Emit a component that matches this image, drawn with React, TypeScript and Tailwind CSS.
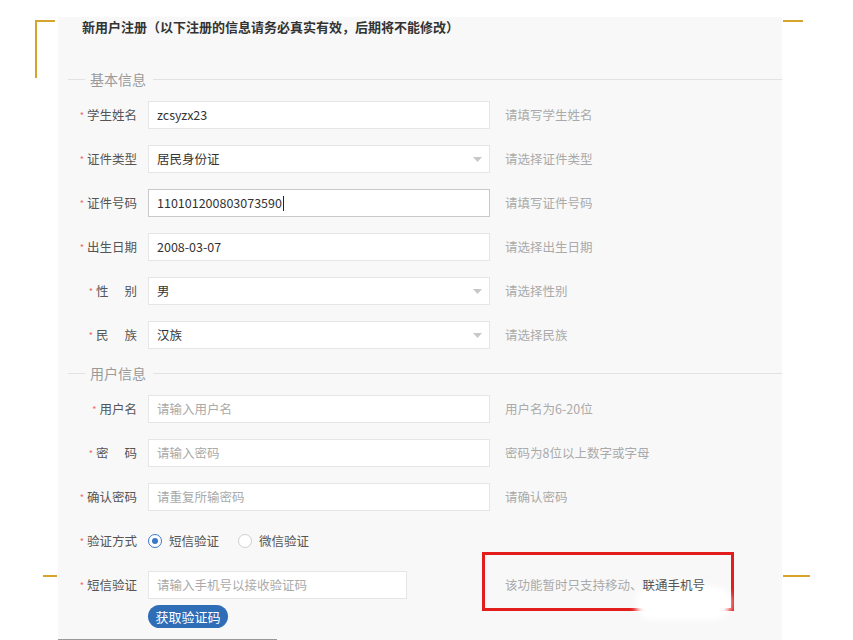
import type { ReactNode } from "react";

const FONT = "font-['Noto_Sans_CJK_SC','Noto_Sans',sans-serif]";

interface FieldProps {
	label: string[];
	children: ReactNode;
	hint?: ReactNode;
}

/** Right aligned label with red asterisk; two-char labels are spread apart */
function Label({ label }: { label: string[] }) {
	return (
		<div className="flex w-[79px] shrink-0 items-center justify-end text-[12.5px] text-[#555]">
			<span className="mr-[3px] text-[9px] text-[#e66] leading-none">*</span>
			<span className={label.length === 2 ? "flex gap-[16px]" : "flex"}>
				{label.map((c, i) => (
					<span key={i}>{c}</span>
				))}
			</span>
		</div>
	);
}

function Field({ label, children, hint }: FieldProps) {
	return (
		<div className="flex h-[28px] items-center">
			<Label label={label} />
			<div className="ml-[11px]">{children}</div>
			{hint && <div className="ml-[15px] text-[12.5px] text-[#aaa]">{hint}</div>}
		</div>
	);
}

function TextBox({
	value,
	placeholder,
	focused,
	width = "w-[342px]",
}: {
	value?: string;
	placeholder?: string;
	focused?: boolean;
	width?: string;
}) {
	return (
		<div
			className={`flex h-[28px] ${width} items-center border bg-white px-[8px] text-[12.5px] ${
				focused ? "border-[#c9c9c9]" : "border-[#e6e6e6]"
			}`}
		>
			{value ? (
				<span className="text-[#333]">{value}</span>
			) : (
				<span className="text-[#aaa]">{placeholder}</span>
			)}
			{focused && <span className="ml-px h-[15px] w-px bg-[#222]" />}
		</div>
	);
}

function SelectBox({ value }: { value: string }) {
	return (
		<div className="flex h-[28px] w-[342px] items-center justify-between border border-[#e6e6e6] bg-white pr-[7px] pl-[8px] text-[12.5px] text-[#333]">
			<span>{value}</span>
			<svg width="9" height="5" viewBox="0 0 9 5" aria-hidden="true">
				<path d="M0 0h9L4.5 5z" fill="#c8c8c8" />
			</svg>
		</div>
	);
}

function SectionTitle({ children }: { children: ReactNode }) {
	return (
		<div className="flex h-[20px] items-center pl-[10px]">
			<div className="h-px w-[17px] bg-[#e2e2e2]" />
			<span className="mr-[7px] ml-[5px] text-[14px] text-[#9a9a9a]">{children}</span>
			<div className="h-px flex-1 bg-[#e2e2e2]" />
		</div>
	);
}

function Radio({ checked, label }: { checked?: boolean; label: string }) {
	return (
		<label className="flex items-center gap-[7px] text-[12.5px] text-[#555]">
			<span
				className={`flex size-[14px] items-center justify-center rounded-full border bg-white ${
					checked ? "border-[#3b78c9]" : "border-[#cfcfcf]"
				}`}
			>
				{checked && <span className="size-[6px] rounded-full bg-[#3b78c9]" />}
			</span>
			{label}
		</label>
	);
}

export default function App() {
	return (
		<div className={`relative h-[640px] overflow-hidden bg-white ${FONT}`}>
			{/* 金色角标 */}
			<div className="absolute top-[20px] left-[35px] h-[58px] w-[2px] bg-[#d6a42c]" />
			<div className="absolute top-[20px] left-[35px] h-[2px] w-[20px] bg-[#d6a42c]" />
			<div className="absolute top-[20px] left-[783px] h-[2px] w-[20px] bg-[#d6a42c]" />
			<div className="absolute top-[575px] left-[43px] h-[2px] w-[14px] bg-[#d6a42c]" />
			<div className="absolute top-[575px] left-[783px] h-[2px] w-[27px] bg-[#d6a42c]" />

			<div className="mt-[17px] ml-[58px] h-[623px] w-[724px] bg-[#f8f8f8]">
				<h2 className="flex h-[20px] items-center pl-[24px] font-bold text-[#333] text-[13px]">
					新用户注册（以下注册的信息请务必真实有效，后期将不能修改）
				</h2>

				<div className="mt-[32px]">
					<SectionTitle>基本信息</SectionTitle>
				</div>
				<div className="mt-[12px] flex flex-col gap-[16px]">
					<Field label={["学", "生", "姓", "名"]} hint="请填写学生姓名">
						<TextBox value="zcsyzx23" />
					</Field>
					<Field label={["证", "件", "类", "型"]} hint="请选择证件类型">
						<SelectBox value="居民身份证" />
					</Field>
					<Field label={["证", "件", "号", "码"]} hint="请填写证件号码">
						<TextBox value="110101200803073590" focused />
					</Field>
					<Field label={["出", "生", "日", "期"]} hint="请选择出生日期">
						<TextBox value="2008-03-07" />
					</Field>
					<Field label={["性", "别"]} hint="请选择性别">
						<SelectBox value="男" />
					</Field>
					<Field label={["民", "族"]} hint="请选择民族">
						<SelectBox value="汉族" />
					</Field>
				</div>

				<div className="mt-[14px]">
					<SectionTitle>用户信息</SectionTitle>
				</div>
				<div className="mt-[12px] flex flex-col gap-[16px]">
					<Field label={["用", "户", "名"]} hint="用户名为6-20位">
						<TextBox placeholder="请输入用户名" />
					</Field>
					<Field label={["密", "码"]} hint="密码为8位以上数字或字母">
						<TextBox placeholder="请输入密码" />
					</Field>
					<Field label={["确", "认", "密", "码"]} hint="请确认密码">
						<TextBox placeholder="请重复所输密码" />
					</Field>
					<Field label={["验", "证", "方", "式"]}>
						<div className="flex items-center gap-[19px]">
							<Radio checked label="短信验证" />
							<Radio label="微信验证" />
						</div>
					</Field>
					<div className="flex h-[28px] items-center">
						<Label label={["短", "信", "验", "证"]} />
						<div className="ml-[11px]">
							<TextBox placeholder="请输入手机号以接收验证码" width="w-[259px]" />
						</div>
						<div className="relative ml-[98px] text-[12.5px] text-[#aaa]">
							{/* 红色标注框 */}
							<div className="absolute -top-[24px] -left-[23px] h-[59px] w-[252px] border-[3px] border-[#e31c1c]" />
							<div className="absolute top-[10px] left-[130px] h-[34px] w-[96px] rounded-full bg-white blur-[3px]" />
							<span className="relative">
								该功能暂时只支持移动、<span className="text-[#555]">联通手机号</span>
							</span>
						</div>
					</div>
				</div>

				<div className="mt-[4px] ml-[90px]">
					<button
						type="button"
						className="h-[23px] w-[80px] rounded-full bg-[#2f6db6] text-[13px] text-white"
					>
						获取验证码
					</button>
				</div>
				<div className="mt-[11px] h-px w-[219px] bg-[#9a9a9a]" />
			</div>
		</div>
	);
}
